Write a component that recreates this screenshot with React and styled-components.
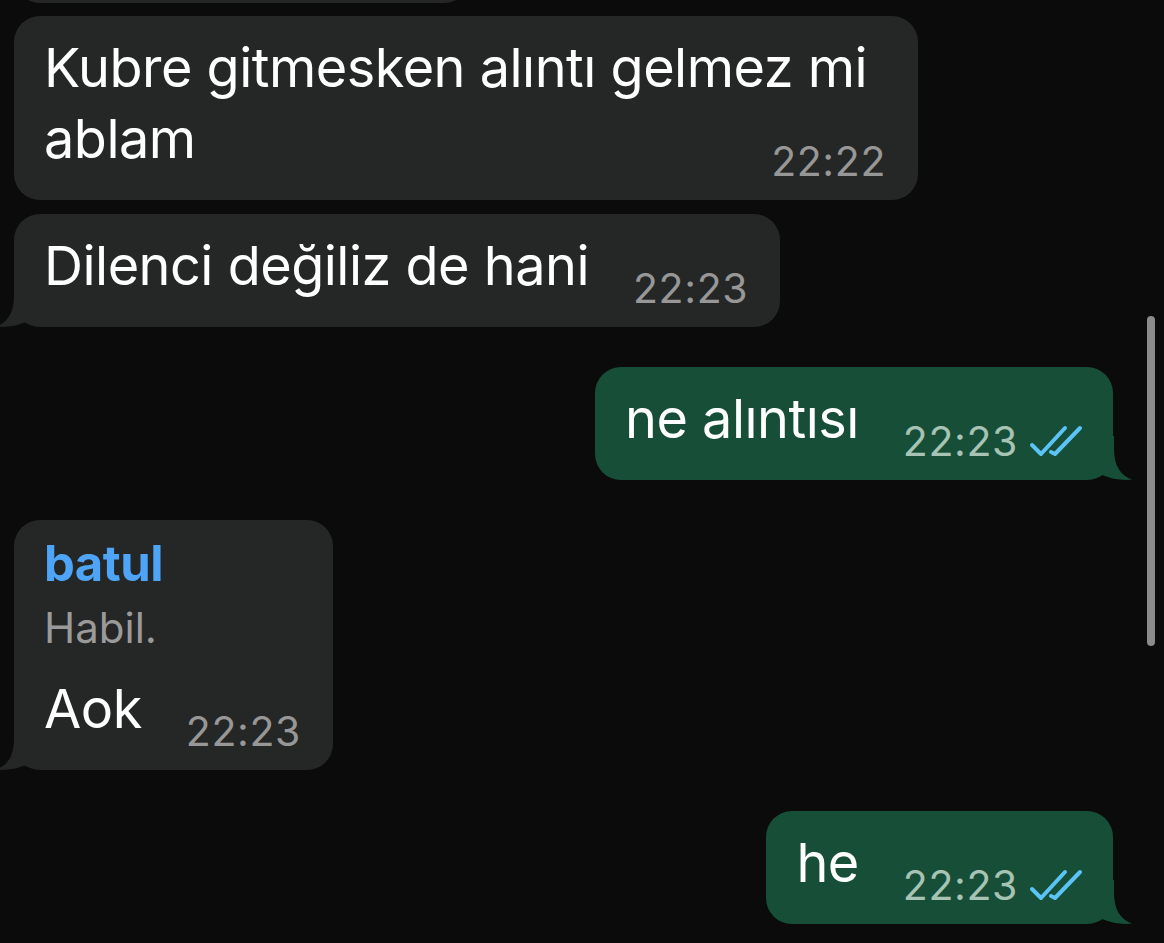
import React from "react";
import styled, { createGlobalStyle } from "styled-components";

const Global = createGlobalStyle`
  html, body {
    margin: 0;
    padding: 0;
    background: #0b0b0b;
    overflow: hidden;
  }
  body {
    font-family: Inter, "Noto Sans", "Liberation Sans", sans-serif;
    -webkit-font-smoothing: antialiased;
  }
`;

const Screen = styled.div`
  width: 1164px;
  height: 943px;
  background: #0b0b0b;
  display: flex;
  flex-direction: column;
  overflow: hidden;
`;

const Row = styled.div`
  display: flex;
  justify-content: ${(p) => (p.$out ? "flex-end" : "flex-start")};
  padding: 0 ${(p) => (p.$out ? "51px" : "0")} 0 ${(p) => (p.$out ? "0" : "14px")};
  margin-top: ${(p) => p.$gap || 0}px;
`;

const Clip = styled.div`
  height: 3px;
  overflow: hidden;
  display: flex;
  align-items: flex-end;
`;

const PrevBubble = styled.div`
  width: 456px;
  height: 60px;
  flex-shrink: 0;
  border-radius: 26px;
  background: #252626;
`;

const Bubble = styled.div`
  position: relative;
  display: flow-root;
  box-sizing: border-box;
  max-width: 904px;
  padding: 16px ${(p) => (p.$out ? "30px" : "32px")} 19px 30px;
  border-radius: 26px;
  background: ${(p) => (p.$out ? "#164e38" : "#252626")};
  color: #ffffff;
`;

const Text = styled.span`
  font-size: 54px;
  line-height: 71px;
  letter-spacing: -0.5px;
`;

const Name = styled.div`
  font-size: 49px;
  line-height: 56px;
  font-weight: 700;
  color: #4ea4f6;
  letter-spacing: -0.5px;
`;

const Reply = styled.div`
  font-size: 42px;
  line-height: 56px;
  margin-top: 8px;
  margin-bottom: 17px;
  color: #9a9a9a;
`;

const Meta = styled.span`
  float: right;
  display: flex;
  align-items: flex-end;
  gap: 11px;
  margin: 38px 0 0 44px;
  height: 40px;
  font-size: 41px;
  line-height: 40px;
  letter-spacing: 0.6px;
  color: ${(p) => (p.$out ? "#a6c3b3" : "#979797")};
`;

const TailSvg = styled.svg`
  position: absolute;
  bottom: 0;
  ${(p) => (p.$out ? "right: -19px; transform: scaleX(-1);" : "left: -18px;")}
  width: 44px;
  height: 44px;
  display: block;
`;

const ScrollThumb = styled.div`
  position: fixed;
  top: 316px;
  right: 9px;
  width: 8px;
  height: 330px;
  border-radius: 4px;
  background: #8b8b8b;
`;

function Tail({ out }) {
  return (
    <TailSvg $out={out} viewBox="0 0 44 44" aria-hidden="true">
      <path
        d="M18 0 L18 12 C18 30 12 39 0 43.6 C10 44.6 21 43 30 39 L36 30 L36 0 Z"
        fill={out ? "#164e38" : "#252626"}
      />
    </TailSvg>
  );
}

function Checks() {
  return (
    <svg width="54" height="32" viewBox="0 0 54 32" aria-hidden="true" style={{ marginBottom: 4 }}>
      <g fill="none" stroke="#5cc3f5" strokeWidth="4" strokeLinecap="round" strokeLinejoin="round">
        <path d="M3 20 L12 29 L36 3" />
        <path d="M22 27 L26 29 L51 3" />
      </g>
    </svg>
  );
}

function Message({ out, tail, name, reply, text, time, gap }) {
  return (
    <Row $out={out} $gap={gap}>
      <Bubble $out={out}>
        {name && <Name>{name}</Name>}
        {reply && <Reply>{reply}</Reply>}
        <Text>{text}</Text>
        <Meta $out={out}>
          <span>{time}</span>
          {out && <Checks />}
        </Meta>
        {tail && <Tail out={out} />}
      </Bubble>
    </Row>
  );
}

export default function App() {
  return (
    <>
      <Global />
      <Screen>
        <Row>
          <Clip>
            <PrevBubble />
          </Clip>
        </Row>
        <Message gap={13} text="Kubre gitmesken alıntı gelmez mi ablam" time="22:22" />
        <Message gap={14} tail text="Dilenci değiliz de hani" time="22:23" />
        <Message gap={40} out tail text="ne alıntısı" time="22:23" />
        <Message gap={40} tail name="batul" reply="Habil." text="Aok" time="22:23" />
        <Message gap={41} out tail text="he" time="22:23" />
        <ScrollThumb />
      </Screen>
    </>
  );
}
